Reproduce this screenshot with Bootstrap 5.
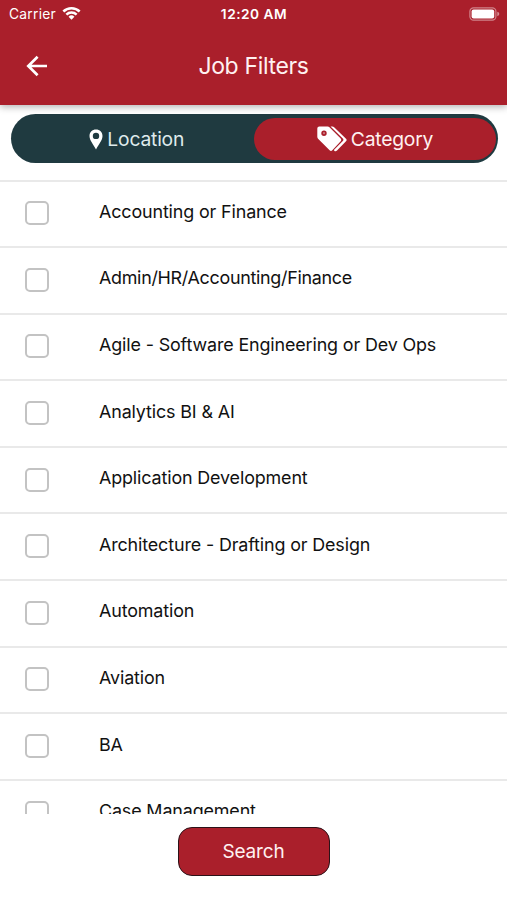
<!DOCTYPE html>
<html lang="en">
<head>
<meta charset="utf-8">
<meta name="viewport" content="width=device-width, initial-scale=1">
<title>Job Filters</title>
<link href="https://cdn.jsdelivr.net/npm/bootstrap@5.3.0/dist/css/bootstrap.min.css" rel="stylesheet">
<style>
  :root { --brand: #aa1f2b; --deep: #1f3a40; }
  body { font-family: Inter, "Liberation Sans", sans-serif; color: #111; }
  .screen { height: 900px; }
  .app-top { height: 104.5px; background: var(--brand); box-shadow: 0 2px 7px rgba(0,0,0,.3); z-index: 2; }
  .status { height: 27px; padding: 0 7px 0 9px; font-size: 13.8px; }
  .status > div { flex: 1 1 0; }
  .carrier { letter-spacing: .25px; margin-right: 6px; padding-top: 1px; }
  .clock { font-size: 13.7px; letter-spacing: .5px; padding: 1px 1px 0 0; }
  .title-bar { height: 77px; padding: 1px 25px 0; }
  .title-bar > * { flex: 1 1 0; }
  .title { font-size: 23px; letter-spacing: -.35px; font-weight: 400; color: #fff1f1; padding-top: 1px; }
  .switcher { height: 49px; margin: 9.5px 9.5px 0 10.5px; padding: 3.5px 1.5px 3px 2px; background: var(--deep); }
  .seg { flex: 1 1 0; font-size: 19.3px; letter-spacing: -.2px; color: #dfeaec; padding: 1px 0 0 7px; }
  .seg.chosen { background: var(--brand); color: #fff1f1; padding-left: 0; flex: 0 0 242px; }
  .filters { margin-top: 16.5px; height: 634.5px; }
  .filter { height: 66.6px; border-top: 2px solid #e9e9e9; padding: 0 25px; }
  .filter .form-check-input { width: 24px; height: 24px; margin: -1px 0 0; border: 2px solid #c3c3c3; border-radius: 5px; }
  .filter label { margin-left: 50px; margin-top: -3px; font-size: 17.9px; letter-spacing: -.13px; white-space: nowrap; }
  .filter .slashed { letter-spacing: -.29px; }
  .search { width: 152px; height: 49px; margin-top: 12.5px; padding: 2px 0 0; border: 1.5px solid #2b1218; border-radius: 14px; background: var(--brand); color: #fff1f1; font-size: 19px; letter-spacing: -.2px; }
</style>
</head>
<body>
<main class="screen d-flex flex-column overflow-hidden bg-white">
  <header class="app-top text-white position-relative flex-shrink-0">
    <div class="status d-flex align-items-center">
      <div class="d-flex align-items-center"><span class="carrier">Carrier</span>
        <svg width="19" height="15" viewBox="0 0 20 15" fill="none" stroke="#fff" stroke-width="2.6"><path d="M1.4 5.4a12.3 12.3 0 0 1 17.2 0M4.6 8.7a7.7 7.7 0 0 1 10.8 0"/><path d="M10 14 6.9 10.9a4.4 4.4 0 0 1 6.2 0Z" fill="#fff" stroke="none"/></svg>
      </div>
      <div class="clock fw-semibold text-center">12:20 AM</div>
      <div class="d-flex justify-content-end">
        <svg width="31" height="14" viewBox="0 0 31 14"><rect x=".9" y=".8" width="26" height="12.4" rx="3.6" fill="none" stroke="#fff" stroke-opacity=".45" stroke-width="1.2"/><rect x="2.6" y="2.4" width="22.6" height="9.2" rx="2" fill="#fff"/><path d="M28.3 4.8q2 .6 2 2.2t-2 2.2Z" fill="#fff" fill-opacity=".5"/></svg>
      </div>
    </div>
    <div class="title-bar d-flex align-items-center">
      <div><a href="#" class="d-flex" aria-label="Back"><svg width="24" height="22" viewBox="0 0 24 22" fill="none" stroke="#fff" stroke-width="2.7"><path d="M22 11H3.300M12.600 1.700 3.300 11l9.300 9.300"/></svg></a></div>
      <h1 class="title text-center text-nowrap m-0">Job Filters</h1>
      <div></div>
    </div>
  </header>

  <div class="switcher d-flex rounded-pill flex-shrink-0" role="tablist">
    <div class="seg d-flex align-items-center justify-content-center" role="tab">
      <svg class="me-1" width="14" height="21" viewBox="0 0 14 21"><path fill="#fff" fill-rule="evenodd" d="M7 .5C3.200.5.5 3.200.5 6.900.5 11.200 4.200 14.800 7 20.500 9.800 14.800 13.500 11.200 13.500 6.900 13.500 3.200 10.800.5 7 .5ZM7 3.700a3.200 3.200 0 1 1 0 6.400 3.200 3.200 0 0 1 0-6.400Z"/></svg>
      <span>Location</span>
    </div>
    <div class="seg chosen d-flex align-items-center justify-content-center rounded-pill" role="tab">
      <svg class="me-1" width="30" height="26" viewBox="0 0 30 26"><path fill="#fff" fill-rule="evenodd" d="M.3 2.500Q.3.5 2.300.5H10.500Q11.800.5 12.700 1.400L23.700 12.400Q25 13.800 23.700 15.200L15.300 24.300Q14 25.500 12.600 24.300L1.300 13Q.3 12 .3 10.700ZM7 4.500a2.700 2.700 0 1 0 0 5.400 2.700 2.700 0 0 0 0-5.400Z"/><circle cx="7" cy="7.200" r="1.100" fill="#fff" fill-opacity=".4"/><path fill="#fff" d="M13.500.5h1.700q1.200 0 2.200 1L29 12.700q1.200 1.200 0 2.500L20 24.500q-1.400 1.300-2.700.2l-.4-.6 8.900-9q1.200-1.300 0-2.500Z"/></svg>
      <span>Category</span>
    </div>
  </div>

  <section class="filters overflow-hidden flex-shrink-0">
    <div class="filter d-flex align-items-center"><input class="form-check-input" type="checkbox" id="f1"><label for="f1">Accounting or Finance</label></div>
    <div class="filter d-flex align-items-center"><input class="form-check-input" type="checkbox" id="f2"><label class="slashed" for="f2">Admin/HR/Accounting/Finance</label></div>
    <div class="filter d-flex align-items-center"><input class="form-check-input" type="checkbox" id="f3"><label for="f3">Agile - Software Engineering or Dev Ops</label></div>
    <div class="filter d-flex align-items-center"><input class="form-check-input" type="checkbox" id="f4"><label for="f4">Analytics BI &amp; AI</label></div>
    <div class="filter d-flex align-items-center"><input class="form-check-input" type="checkbox" id="f5"><label for="f5">Application Development</label></div>
    <div class="filter d-flex align-items-center"><input class="form-check-input" type="checkbox" id="f6"><label for="f6">Architecture - Drafting or Design</label></div>
    <div class="filter d-flex align-items-center"><input class="form-check-input" type="checkbox" id="f7"><label for="f7">Automation</label></div>
    <div class="filter d-flex align-items-center"><input class="form-check-input" type="checkbox" id="f8"><label for="f8">Aviation</label></div>
    <div class="filter d-flex align-items-center"><input class="form-check-input" type="checkbox" id="f9"><label for="f9">BA</label></div>
    <div class="filter d-flex align-items-center"><input class="form-check-input" type="checkbox" id="f10"><label for="f10">Case Management</label></div>
  </section>

  <button type="button" class="search btn align-self-center flex-shrink-0">Search</button>
</main>
<script src="https://cdn.jsdelivr.net/npm/bootstrap@5.3.0/dist/js/bootstrap.bundle.min.js"></script>
</body>
</html>
